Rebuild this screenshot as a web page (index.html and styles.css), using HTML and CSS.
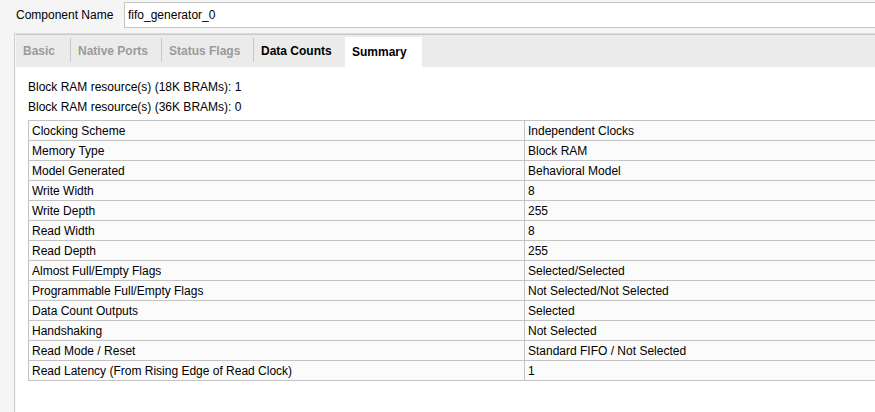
FILE: index.html
```html
<!DOCTYPE html>
<html>
<head>
<meta charset="utf-8">
<link rel="stylesheet" href="styles.css">
</head>
<body>
<div class="header">
  <label class="name-label">Component Name</label>
  <div class="name-input">fifo_generator_0</div>
</div>
<div class="panel">
  <div class="tabbar">
    <div class="tab disabled t-basic">Basic</div>
    <div class="sep"></div>
    <div class="tab disabled t-native">Native Ports</div>
    <div class="sep"></div>
    <div class="tab disabled t-status">Status Flags</div>
    <div class="sep"></div>
    <div class="tab t-data">Data Counts</div>
    <div class="tab active t-summary">Summary</div>
  </div>
  <div class="content">
    <div class="line">Block RAM resource(s) (18K BRAMs): 1</div>
    <div class="line">Block RAM resource(s) (36K BRAMs): 0</div>
    <table class="summary">
      <tr><td class="k">Clocking Scheme</td><td>Independent Clocks</td></tr>
      <tr><td class="k">Memory Type</td><td>Block RAM</td></tr>
      <tr><td class="k">Model Generated</td><td>Behavioral Model</td></tr>
      <tr><td class="k">Write Width</td><td>8</td></tr>
      <tr><td class="k">Write Depth</td><td>255</td></tr>
      <tr><td class="k">Read Width</td><td>8</td></tr>
      <tr><td class="k">Read Depth</td><td>255</td></tr>
      <tr><td class="k">Almost Full/Empty Flags</td><td>Selected/Selected</td></tr>
      <tr><td class="k">Programmable Full/Empty Flags</td><td>Not Selected/Not Selected</td></tr>
      <tr><td class="k">Data Count Outputs</td><td>Selected</td></tr>
      <tr><td class="k">Handshaking</td><td>Not Selected</td></tr>
      <tr><td class="k">Read Mode / Reset</td><td>Standard FIFO / Not Selected</td></tr>
      <tr><td class="k">Read Latency (From Rising Edge of Read Clock)</td><td>1</td></tr>
    </table>
  </div>
</div>
</body>
</html>
```

FILE: styles.css
```css
html, body {
  margin: 0;
  padding: 0;
  height: 100%;
  overflow: hidden;
}
body {
  background: #f5f5f5;
  font-family: "Liberation Sans", Arial, sans-serif;
  font-size: 12px;
  color: #000;
  display: flex;
  flex-direction: column;
}
.header {
  display: flex;
  align-items: center;
  padding-top: 2px;
  height: 26px;
  flex: none;
}
.name-label {
  width: 108px;
  padding-left: 16px;
}
.name-input {
  flex: 1;
  height: 26px;
  box-sizing: border-box;
  background: #fff;
  border: 1px solid #c4c4c4;
  border-right: none;
  padding-left: 3px;
  display: flex;
  align-items: center;
}
.panel {
  margin-top: 5px;
  margin-left: 14px;
  flex: 1;
  min-width: 0;
  display: flex;
  flex-direction: column;
  border-left: 1px solid #cfcfcf;
  border-top: 1px solid #dcdcdc;
  box-shadow: inset 1px 0 0 #f6f6f6;
  padding-left: 1px;
  background: #fff;
  overflow: hidden;
}
.tabbar {
  display: flex;
  align-items: stretch;
  background: #ebebeb;
  border-top: 1px solid #c8c8c8;
  box-sizing: border-box;
  height: 33px;
  flex: none;
}
.tab {
  font-weight: bold;
  display: flex;
  align-items: center;
  padding-left: 7px;
  padding-bottom: 1px;
  box-sizing: border-box;
}
.tab.disabled {
  color: #9a9a9a;
}
.sep {
  width: 1px;
  background: #c8c8c8;
  margin: 3px 0 5px;
}
.t-basic { width: 54px; }
.t-native { width: 90px; }
.t-status { width: 91px; }
.t-data { width: 91px; }
.tab.active {
  background: #fff;
  margin-top: 2px;
  width: 77px;
  padding-left: 7px;
}
.content {
  flex: 1;
  background: #fff;
  padding: 10px 0 0 12px;
  overflow: hidden;
}
.line {
  height: 20px;
  line-height: 20px;
}
.summary {
  border-collapse: collapse;
  width: calc(100% + 4px);
  margin-top: 3px;
  background: #fbfbfb;
}
.summary td {
  border: 1px solid #c4c4c4;
  height: 19px;
  padding: 0 0 0 3px;
  line-height: 18px;
  white-space: nowrap;
}
.summary td.k {
  width: 492px;
}
```
